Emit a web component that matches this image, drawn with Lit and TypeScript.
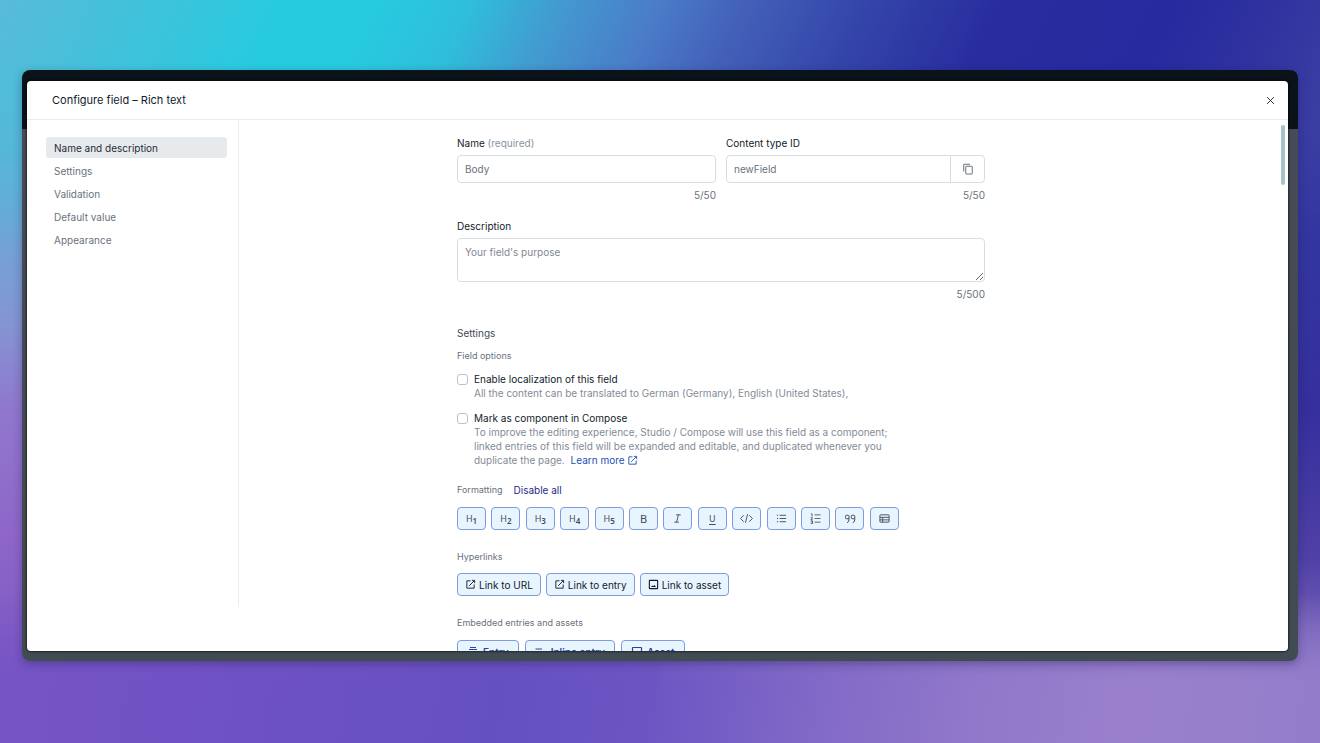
import { LitElement, html, css, svg } from "lit";
import { customElement, state } from "lit/decorators.js";
import { classMap } from "lit/directives/class-map.js";

const icon = (content: unknown, size = 12) => html`<svg
  class="icon"
  viewBox="0 0 24 24"
  width=${size}
  height=${size}
  fill="none"
  stroke="currentColor"
  stroke-width="2"
  aria-hidden="true"
>
  ${content}
</svg>`;

const external = svg`<path d="M12 4H4v16h16v-8M15 3h6v6M20 4 9 15"/>`;
const picture = svg`<rect x="3" y="3" width="18" height="18" rx="1" stroke-width="2.4"/><path d="M6.500 17.500h11l-3.500-4.500-2.500 3-2-2z" fill="currentColor" stroke="none"/>`;
const copy = svg`<path d="M3.500 17V2.500H16"/><rect x="7.500" y="6.500" width="13" height="15.500" rx="1"/>`;
const close = svg`<path d="M3 3l18 18M21 3 3 21" stroke-width="2.400"/>`;
const italic = svg`<path d="M9 4h10M5 20h10M14 4l-4 16"/>`;
const code = svg`<path d="M7 6l-6 6 6 6M17 6l6 6-6 6M14 4l-4 16" stroke-width="1.700"/>`;
const bullets = svg`<path d="M8 5h14M8 12h14M8 19h14"/><path d="M2 5h2.500M2 12h2.500M2 19h2.500" stroke-width="2.500"/>`;
const numbers = svg`<path d="M10 4h13M10 12h13M10 20h13M2 2h2.500V8M1.500 10.500h4L2 15h4M1.500 17.500h4V23h-4M3 20h2.500" stroke-width="1.800"/>`;
const quotes = svg`<path d="M10 11.500H5a2 2 0 0 1-2-2V6.500a2 2 0 0 1 2-2h3a2 2 0 0 1 2 2v7q0 4.500-4 6M21.500 11.500h-5a2 2 0 0 1-2-2V6.500a2 2 0 0 1 2-2h3a2 2 0 0 1 2 2v7q0 4.500-4 6"/>`;
const table = svg`<rect x="2" y="4" width="20" height="16" rx="1"/><path d="M2 9.500h20M2 15h20M8 9.500V20"/>`;
const entry = svg`<path d="M6 3h12M4 7h16"/><path d="M2 11h20v8H2z" fill="currentColor"/>`;
const inline = svg`<path d="M1 6h13M1 12h22M1 18h22" stroke-width="2.400"/>`;
const asset = svg`<rect x="3" y="3" width="18" height="17" rx="1" stroke-width="2.400"/>`;

const SECTIONS = ["Name and description", "Settings", "Validation", "Default value", "Appearance"];

const FORMATS = [
  ...[1, 2, 3, 4, 5].map((n) => ({
    label: `Heading ${n}`,
    face: html`<span class="glyph">H</span><span class="level">${n}</span>`,
  })),
  { label: "Bold", face: html`<span class="glyph large">B</span>` },
  { label: "Italic", face: icon(italic, 11) },
  { label: "Underline", face: html`<span class="glyph underline">U</span>` },
  { label: "Code", face: icon(code, 13) },
  { label: "Unordered list", face: icon(bullets, 11) },
  { label: "Ordered list", face: icon(numbers, 11) },
  { label: "Quote", face: icon(quotes, 12) },
  { label: "Table", face: icon(table, 11) },
];

@customElement("app-root")
export class AppRoot extends LitElement {
  static styles = css`
    :host {
      display: block;
      font-family: Inter, "Liberation Sans", sans-serif;
      font-size: 10px;
      line-height: 14px;
      color: #69727d;
    }
    * {
      box-sizing: border-box;
    }
    button,
    input,
    textarea {
      font: inherit;
      color: inherit;
      margin: 0;
    }
    button {
      cursor: pointer;
    }
    h1,
    h2,
    h3,
    p {
      margin: 0;
      font-size: inherit;
      font-weight: 400;
    }
    .icon {
      display: block;
      flex: none;
    }
    .stage {
      position: relative;
      z-index: 0;
      height: 100vh;
      padding: 70px 22px 82px;
      display: flex;
      background:
        linear-gradient(#5cb8d8 0%, #63afd7 18%, #73a3d6 32%, #8494d3 44%, #9077cd 55%, #8e66c8 72%, #7553c4 100%) left / 50% 100% no-repeat,
        linear-gradient(#3c3fa2 0%, #3236a0 30%, #352f9d 55%, #4f40a5 75%, #8a73c4 92%, #937dca 100%) right / 50% 100% no-repeat;
    }
    .stage::before,
    .stage::after {
      content: "";
      position: absolute;
      z-index: -1;
      left: 0;
      right: 0;
    }
    .stage::before {
      top: 0;
      height: 250px;
      background: linear-gradient(115deg, #58bad8 0%, #3cc4dc 12%, #27cbe0 20%, #27cbe0 26%, #2fbddb 33%, #429bd0 39%, #4a7cc8 46%, #4360b8 52%, #3446aa 60%, #282c9e 70%, #262a9e 82%, #3032a0 89%, #3c3fa2 96%);
      mask-image: linear-gradient(#000 30%, transparent);
    }
    .stage::after {
      bottom: 0;
      height: 150px;
      background: linear-gradient(98deg, #7654c5 0%, #6f52c4 18%, #6550c2 38%, #6c56c3 50%, #8169c7 62%, #9178ca 74%, #9a80cc 86%, #937dca 100%);
      mask-image: linear-gradient(transparent, #000 60%);
    }
    .frame {
      flex: 1;
      min-width: 0;
      display: flex;
      padding: 11px 10px 10px 5px;
      border-radius: 8px;
      background: linear-gradient(#0a1319 59px, #474b57 59px, #414b52);
      box-shadow: 0 3px 10px rgba(30, 20, 70, 0.35);
    }
    .modal {
      position: relative;
      flex: 1;
      min-width: 0;
      display: flex;
      flex-direction: column;
      border-radius: 4px;
      background: #fff;
      overflow: hidden;
      box-shadow: 0 0 2px 1px rgba(0, 0, 0, 0.5);
    }
    .header {
      display: flex;
      align-items: center;
      justify-content: space-between;
      flex: none;
      height: 39px;
      padding: 0 11px 0 25px;
      border-bottom: 1px solid #e9ecef;
    }
    .title {
      font-size: 11px;
      color: #111b2b;
    }
    .close {
      padding: 2px;
      border: 0;
      background: none;
      color: #111b2b;
    }
    .body {
      flex: 1;
      min-height: 0;
      display: flex;
    }
    .sidebar {
      flex: none;
      width: 212px;
      margin-bottom: 44px;
      padding: 17px 11px 0 19px;
      border-right: 1px solid #e9ecef;
      display: flex;
      flex-direction: column;
      gap: 2px;
    }
    .section {
      height: 21px;
      padding: 0 8px;
      border: 0;
      border-radius: 3px;
      background: none;
      text-align: left;
    }
    .section.active {
      background: #e7eaed;
      color: #1f2a38;
    }
    .scroller {
      flex: 1;
      min-width: 0;
      overflow: hidden;
      padding: 16px 85px 0 0;
    }
    .form {
      max-width: 528px;
      margin: 0 auto;
      display: flex;
      flex-direction: column;
    }
    .pair {
      display: grid;
      grid-template-columns: 1fr 1fr;
      gap: 10px;
    }
    .field {
      display: flex;
      flex-direction: column;
      gap: 5px;
    }
    .label {
      color: #111b2b;
    }
    .hint {
      color: #89929c;
    }
    .control {
      width: 100%;
      height: 28px;
      padding: 0 7px;
      border: 1px solid #d8dde1;
      border-radius: 4px;
      background: #fff;
    }
    .area {
      height: 44px;
      padding: 6px 7px;
      resize: vertical;
      display: block;
    }
    .area::placeholder {
      color: #7f8893;
    }
    .joined {
      display: flex;
    }
    .joined .control {
      border-radius: 4px 0 0 4px;
    }
    .copy {
      flex: none;
      width: 35px;
      margin-left: -1px;
      padding: 0;
      border: 1px solid #d8dde1;
      border-radius: 0 4px 4px 0;
      background: #fff;
      display: grid;
      place-items: center;
    }
    .count {
      text-align: right;
    }
    .describe {
      margin-top: 17px;
    }
    .heading {
      margin-top: 25px;
      color: #3f4955;
    }
    .group {
      margin-top: 9px;
      font-size: 9px;
    }
    .options {
      display: flex;
      flex-direction: column;
      gap: 11px;
      margin-top: 9px;
    }
    .option {
      display: grid;
      grid-template-columns: 11px 1fr;
      column-gap: 6px;
      align-items: center;
      max-width: 440px;
    }
    .box {
      appearance: none;
      width: 11px;
      height: 11px;
      border: 1px solid #bcc3ca;
      border-radius: 3px;
      background: #fff;
    }
    .box:checked {
      background: #2f5bd0;
    }
    .detail {
      grid-column: 2;
      color: #838b96;
    }
    .link {
      margin-left: 3px;
      color: #2350b4;
      text-decoration: none;
    }
    .link .icon {
      display: inline-block;
      vertical-align: -2px;
    }
    .line {
      display: flex;
      align-items: center;
      gap: 11px;
      margin-top: 16px;
      font-size: 9px;
    }
    .line.spaced {
      margin-top: 20px;
    }
    .toggle {
      padding: 0;
      border: 0;
      background: none;
      font-size: 10px;
      color: #27278c;
    }
    .tools {
      display: flex;
      justify-content: space-between;
      max-width: 442px;
      margin-top: 10px;
    }
    .chips {
      display: flex;
      gap: 5px;
      margin-top: 9px;
    }
    .chips.wide {
      gap: 6px;
      margin-top: 10px;
    }
    .tool,
    .chip {
      height: 23px;
      display: flex;
      align-items: center;
      justify-content: center;
      border: 1px solid #7d9be0;
      border-radius: 4px;
      background: #e8f5ff;
    }
    .tool {
      width: 29px;
      padding: 0;
      color: #414d59;
    }
    .chip {
      gap: 3px;
      padding: 0 7px;
      color: #111b2b;
    }
    .wide .chip {
      gap: 4px;
      padding: 0 9px;
      font-weight: 600;
      color: #2545a0;
    }
    .glyph {
      font-family: "Noto Sans", sans-serif;
      font-size: 9px;
    }
    .large {
      font-size: 11px;
    }
    .underline {
      text-decoration: underline;
      text-underline-offset: 2px;
    }
    .level {
      font-family: "Noto Sans", sans-serif;
      font-size: 8px;
      font-weight: 600;
      line-height: 10px;
      padding-top: 4px;
    }
    .thumb {
      position: absolute;
      top: 44px;
      right: 3px;
      width: 4px;
      height: 60px;
      border-radius: 2px;
      background: #a9c2c8;
    }
  `;

  @state() private section = 0;

  render() {
    return html`
      <div class="stage">
        <div class="frame">
          <div class="modal" role="dialog" aria-labelledby="title">
            <header class="header">
              <h1 class="title" id="title">Configure field – Rich text</h1>
              <button class="close" aria-label="Close">${icon(close, 9)}</button>
            </header>
            <div class="body">
              <nav class="sidebar">
                ${SECTIONS.map(
                  (name, i) => html`<button
                    class=${classMap({ section: true, active: i === this.section })}
                    @click=${() => (this.section = i)}
                  >${name}</button>`,
                )}
              </nav>
              <main class="scroller">${this.form()}</main>
            </div>
            <div class="thumb"></div>
          </div>
        </div>
      </div>
    `;
  }

  private form() {
    return html`
      <form class="form" @submit=${(e: Event) => e.preventDefault()}>
        <div class="pair">
          <div class="field">
            <label class="label" for="name">Name <span class="hint">(required)</span></label>
            <input class="control" id="name" value="Body" />
            <div class="count">5/50</div>
          </div>
          <div class="field">
            <label class="label" for="type-id">Content type ID</label>
            <div class="joined">
              <input class="control" id="type-id" value="newField" />
              <button class="copy" type="button" aria-label="Copy ID">${icon(copy, 12)}</button>
            </div>
            <div class="count">5/50</div>
          </div>
        </div>
        <div class="field describe">
          <label class="label" for="description">Description</label>
          <textarea class="control area" id="description" placeholder="Your field's purpose"></textarea>
          <div class="count">5/500</div>
        </div>

        <h2 class="heading">Settings</h2>
        <h3 class="group">Field options</h3>
        <div class="options">
          <div class="option">
            <input class="box" type="checkbox" id="localize" />
            <label class="label" for="localize">Enable localization of this field</label>
            <p class="detail">All the content can be translated to German (Germany), English (United States),</p>
          </div>
          <div class="option">
            <input class="box" type="checkbox" id="compose" />
            <label class="label" for="compose">Mark as component in Compose</label>
            <p class="detail">
              To improve the editing experience, Studio / Compose will use this field as a component;
              linked entries of this field will be expanded and editable, and duplicated whenever you
              duplicate the page. <a class="link" href="#learn">Learn more ${icon(external, 11)}</a>
            </p>
          </div>
        </div>

        <div class="line">
          <h3>Formatting</h3>
          <button class="toggle" type="button">Disable all</button>
        </div>
        <div class="tools">
          ${FORMATS.map((f) => html`<button class="tool" type="button" aria-label=${f.label}>${f.face}</button>`)}
        </div>

        <div class="line spaced"><h3>Hyperlinks</h3></div>
        <div class="chips">
          <button class="chip" type="button">${icon(external, 11)}Link to URL</button>
          <button class="chip" type="button">${icon(external, 11)}Link to entry</button>
          <button class="chip" type="button">${icon(picture, 11)}Link to asset</button>
        </div>

        <div class="line spaced"><h3>Embedded entries and assets</h3></div>
        <div class="chips wide">
          <button class="chip" type="button">${icon(entry, 12)}Entry</button>
          <button class="chip" type="button">${icon(inline, 12)}Inline entry</button>
          <button class="chip" type="button">${icon(asset, 12)}Asset</button>
        </div>
      </form>
    `;
  }
}
